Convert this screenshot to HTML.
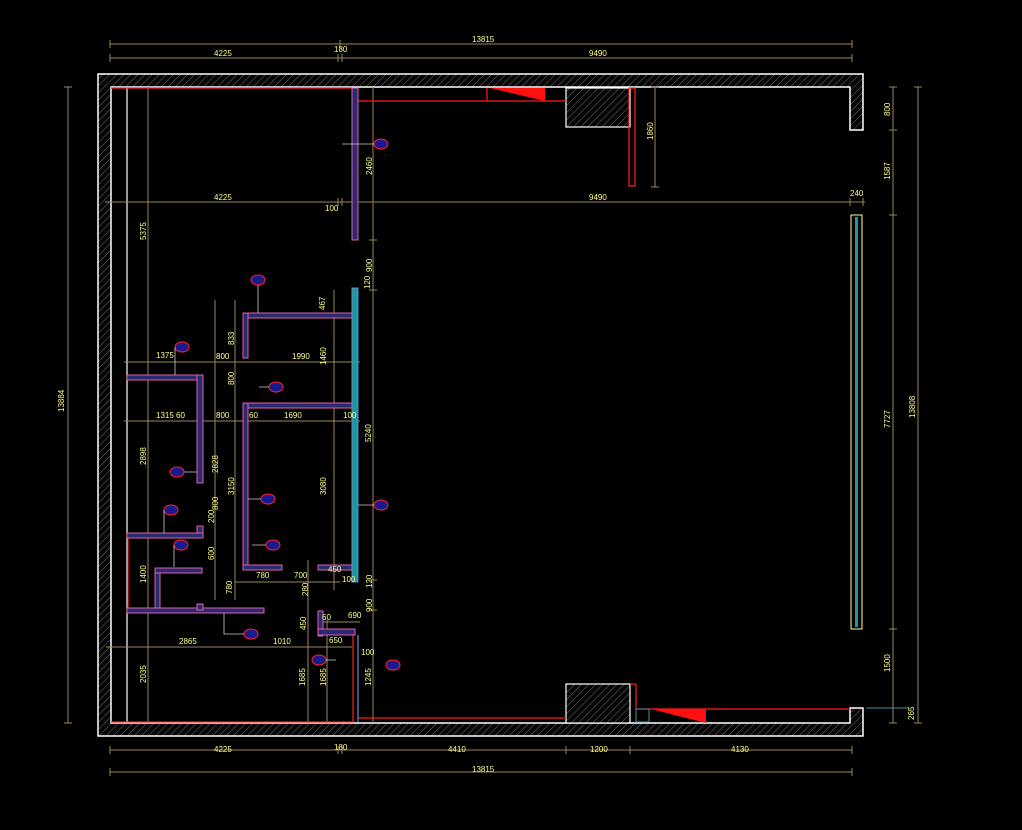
<!DOCTYPE html>
<html><head><meta charset="utf-8"><style>
html,body{margin:0;padding:0;background:#000;}
svg{display:block}
text{font-family:"Liberation Sans Narrow","Liberation Sans",sans-serif;font-size:8px;fill:#ffff88;}
</style></head><body>
<svg width="1022" height="830" viewBox="0 0 1022 830" xmlns="http://www.w3.org/2000/svg">
<defs>
<pattern id="h" width="5" height="5" patternUnits="userSpaceOnUse" patternTransform="rotate(45)">
<rect width="5" height="5" fill="#050505"/><line x1="0" y1="0" x2="0" y2="5" stroke="#6a6a6a" stroke-width="1"/>
</pattern>
</defs>
<rect width="1022" height="830" fill="#000"/>
<!-- outer walls -->
<path d="M98 74 H863 V130 H850 V87 H111 V723 H850 V708 H863 V736 H98 Z" fill="url(#h)" stroke="#fff" stroke-width="1.5"/>
<!-- columns -->
<rect x="566" y="88" width="64" height="39" fill="url(#h)" stroke="#fff" stroke-width="1.2"/>
<rect x="566" y="684" width="64" height="39" fill="url(#h)" stroke="#fff" stroke-width="1.2"/>
<!-- inner white line -->
<line x1="127" y1="88" x2="127" y2="723" stroke="#fff" stroke-width="1.2"/>
<!-- dims color lines -->
<g stroke="#9a8658" stroke-width="1" fill="none">
<line x1="110" y1="44" x2="852" y2="44"/><line x1="110" y1="58" x2="852" y2="58"/>
<line x1="110" y1="750" x2="852" y2="750"/><line x1="110" y1="772" x2="852" y2="772"/>
<line x1="68" y1="87" x2="68" y2="723"/><line x1="893" y1="87" x2="893" y2="723"/><line x1="918" y1="87" x2="918" y2="723"/>
<line x1="105" y1="202" x2="865" y2="202"/>
<line x1="148" y1="87" x2="148" y2="723"/>
<line x1="373" y1="87" x2="373" y2="723"/>
<line x1="655" y1="87" x2="655" y2="187"/>
<line x1="124" y1="362" x2="360" y2="362"/>
<line x1="124" y1="421" x2="360" y2="421"/>
<line x1="106" y1="647" x2="352" y2="647"/>
<line x1="334" y1="290" x2="334" y2="590"/>
<line x1="215" y1="300" x2="215" y2="600"/>
<line x1="235" y1="300" x2="235" y2="600"/>
<line x1="308" y1="560" x2="308" y2="723"/>
<line x1="327" y1="620" x2="327" y2="723"/>
<line x1="235" y1="582" x2="340" y2="582"/>
<line x1="322" y1="622" x2="360" y2="622"/>
<g stroke-width="1">
<path d="M110 40v8M340 40v8M852 40v8M110 54v8M338 54v8M342 54v8M852 54v8M110 746v8M338 746v8M342 746v8M566 746v8M630 746v8M852 746v8M110 768v8M852 768v8"/>
<path d="M64 87h8M64 723h8M889 87h8M889 130h8M889 215h8M889 629h8M889 708h8M889 723h8M914 87h8M914 723h8M850 198v8M863 198v8M338 198v8M342 198v8M369 240h8M369 290h8M369 580h8M369 610h8M651 87h8M651 187h8"/>
</g>
</g>
<!-- red lines -->
<g stroke="#ff1a1a" stroke-width="1.2" fill="none">
<line x1="111" y1="88" x2="352" y2="88"/>
<line x1="358" y1="101" x2="566" y2="101"/>
<line x1="487" y1="88" x2="487" y2="101"/>
<rect x="629" y="88" width="6" height="98"/>
<line x1="358" y1="718" x2="566" y2="718"/>
<line x1="630" y1="684" x2="636" y2="684"/><line x1="636" y1="684" x2="636" y2="709"/>
<line x1="636" y1="709" x2="850" y2="709"/>
<line x1="128" y1="533" x2="128" y2="612"/>
<line x1="353" y1="630" x2="353" y2="722"/>
<line x1="111" y1="722" x2="353" y2="722"/>
</g>
<polygon points="490,88 545,88 545,101" fill="#ff1010"/>
<polygon points="651,709 706,709 706,723" fill="#ff1010"/>
<rect x="636" y="709" width="13" height="13" fill="none" stroke="#4a8aa0"/>
<line x1="866" y1="708" x2="910" y2="708" stroke="#4a8aa0"/>
<!-- cyan window -->
<rect x="851" y="215" width="11" height="414" fill="#000" stroke="#ffff88" stroke-width="1"/>
<rect x="855" y="217" width="3" height="410" fill="#1a9a9a"/>
<!-- walls -->
<g fill="#2a2a70" stroke="#e060a8" stroke-width="1">
<rect x="352" y="88" width="6" height="152"/>
<rect x="243" y="313" width="110" height="5"/><rect x="243" y="313" width="5" height="45"/>
<rect x="127" y="375" width="76" height="5"/><rect x="197" y="375" width="6" height="108"/>
<rect x="243" y="403" width="110" height="5"/><rect x="243" y="403" width="5" height="165"/>
<rect x="243" y="565" width="39" height="5"/><rect x="318" y="565" width="35" height="5"/>
<rect x="197" y="526" width="6" height="12"/><rect x="127" y="533" width="76" height="5"/>
<rect x="155" y="568" width="5" height="44"/><rect x="155" y="568" width="47" height="5"/>
<rect x="127" y="608" width="137" height="5"/><rect x="197" y="604" width="6" height="6"/>
<rect x="318" y="611" width="5" height="25"/><rect x="318" y="629" width="37" height="6"/>
</g>
<rect x="352" y="288" width="6" height="294" fill="#1a9a9a" stroke="#6a8ad0"/>
<line x1="358" y1="635" x2="358" y2="722" stroke="#6a8ad0" stroke-width="1.2"/>
<!-- ellipse tags -->
<g fill="#1a1a90" stroke="#ff2020" stroke-width="1">
<ellipse cx="381" cy="144" rx="7" ry="5"/><ellipse cx="258" cy="280" rx="7" ry="5"/>
<ellipse cx="182" cy="347" rx="7" ry="5"/><ellipse cx="276" cy="387" rx="7" ry="5"/>
<ellipse cx="177" cy="472" rx="7" ry="5"/><ellipse cx="268" cy="499" rx="7" ry="5"/>
<ellipse cx="381" cy="505" rx="7" ry="5"/><ellipse cx="171" cy="510" rx="7" ry="5"/>
<ellipse cx="181" cy="545" rx="7" ry="5"/><ellipse cx="273" cy="545" rx="7" ry="5"/>
<ellipse cx="251" cy="634" rx="7" ry="5"/><ellipse cx="319" cy="660" rx="7" ry="5"/>
<ellipse cx="393" cy="665" rx="7" ry="5"/>
</g>
<g stroke="#ccc" stroke-width="0.8" fill="none">
<path d="M342 144h32M258 285v28M175 347v28M269 387h-10M184 472h13M261 499h-13M374 505h-16M164 510v23M174 545v22M266 545h-14M244 634h-20v-21M326 660h10"/>
</g>
<!-- labels -->
<text x="472" y="42">13815</text><text x="214" y="56">4225</text><text x="334" y="52">180</text><text x="589" y="56">9490</text>
<text x="214" y="200">4225</text><text x="325" y="211">100</text><text x="589" y="200">9490</text><text x="850" y="196">240</text>
<text x="214" y="752">4225</text><text x="334" y="750">180</text><text x="448" y="752">4410</text><text x="590" y="752">1200</text><text x="731" y="752">4130</text>
<text x="472" y="772">13815</text>
<text x="156" y="358">1375</text><text x="216" y="359">800</text><text x="292" y="359">1990</text>
<text x="156" y="418">1315 60</text><text x="216" y="418">800</text><text x="249" y="418">60</text><text x="284" y="418">1690</text><text x="343" y="418">100</text>
<text x="256" y="578">780</text><text x="294" y="578">700</text><text x="328" y="572">450</text><text x="342" y="582">100</text>
<text x="322" y="620">60</text><text x="348" y="618">690</text><text x="329" y="643">650</text><text x="273" y="644">1010</text><text x="179" y="644">2865</text><text x="361" y="655">100</text>
<g transform="rotate(-90)">
<text x="-412" y="64">13884</text><text x="-418" y="915">13808</text>
<text x="-240" y="146">5375</text><text x="-175" y="372">2460</text><text x="-272" y="372">900</text><text x="-140" y="653">1860</text>
<text x="-116" y="890">800</text><text x="-180" y="890">1587</text><text x="-428" y="890">7727</text><text x="-672" y="890">1500</text><text x="-720" y="914">265</text>
<text x="-442" y="371">5240</text><text x="-289" y="370">120</text><text x="-310" y="325">467</text><text x="-345" y="234">833</text>
<text x="-365" y="326">1460</text><text x="-385" y="234">800</text><text x="-465" y="146">2898</text><text x="-473" y="218">2828</text>
<text x="-495" y="234">3150</text><text x="-495" y="326">3080</text><text x="-510" y="218">800</text><text x="-523" y="214">200</text>
<text x="-560" y="214">600</text><text x="-583" y="146">1400</text><text x="-594" y="232">780</text><text x="-596" y="308">280</text>
<text x="-588" y="372">120</text><text x="-612" y="372">900</text><text x="-630" y="306">450</text>
<text x="-683" y="146">2035</text><text x="-686" y="305">1685</text><text x="-686" y="326">1685</text><text x="-686" y="371">1245</text>
</g>
</svg>
</body></html>
